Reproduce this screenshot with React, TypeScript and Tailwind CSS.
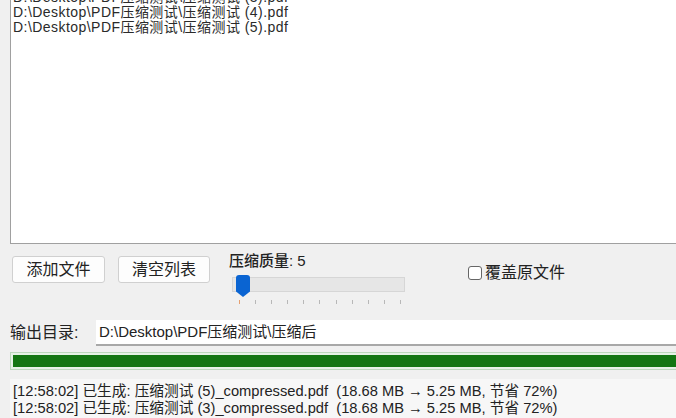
import React from "react";

const files = [
  "D:\\Desktop\\PDF压缩测试\\压缩测试 (3).pdf",
  "D:\\Desktop\\PDF压缩测试\\压缩测试 (4).pdf",
  "D:\\Desktop\\PDF压缩测试\\压缩测试 (5).pdf",
];

const logs = [
  "[12:58:02] 已生成: 压缩测试 (5)_compressed.pdf  (18.68 MB → 5.25 MB, 节省 72%)",
  "[12:58:02] 已生成: 压缩测试 (3)_compressed.pdf  (18.68 MB → 5.25 MB, 节省 72%)",
];

const font = { fontFamily: '"Liberation Sans", "Noto Sans CJK SC", sans-serif' };

export default function App() {
  return (
    <div
      className="w-[676px] h-[418px] overflow-hidden bg-[#f0f0f0] text-[#1a1a1a] flex flex-col"
      style={font}
    >
      {/* file list */}
      <div className="ml-[10px] mr-[-20px] h-[244px] mt-0 bg-white border-l border-b border-[#a0a0a0] overflow-hidden">
        <div className="mt-[-10px] pl-[2px] text-[14px] tracking-[0.45px] leading-[15px] text-[#2a2a2a]">
          {files.map((f) => (
            <div key={f} className="whitespace-pre">{f}</div>
          ))}
        </div>
      </div>

      {/* controls */}
      <div className="flex items-start mt-[12px] h-[58px]">
        <button className="ml-[12px] w-[93px] h-[27px] bg-[#fdfdfd] border border-[#d0d0d0] rounded-[3px] text-[16px] leading-none text-[#222]">
          添加文件
        </button>
        <button className="ml-[13px] w-[92px] h-[27px] bg-[#fdfdfd] border border-[#d0d0d0] rounded-[3px] text-[16px] leading-none text-[#222]">
          清空列表
        </button>
        <div className="ml-[19px] flex flex-col">
          <div className="text-[15px] leading-[16px] mt-[-3px] font-medium text-[#222]">压缩质量: 5</div>
          <div className="relative mt-[8px] ml-[3px] w-[173px] h-[15px] bg-[#e6e6e6] border border-[#d6d6d6]">
            <div className="absolute left-[3px] top-[-3px] w-[14px] h-[22px] bg-[#0a64d2] rounded-t-[3px] [clip-path:polygon(0_0,100%_0,100%_75%,50%_100%,0_75%)]" />
          </div>
          <div className="flex justify-between ml-[10px] w-[162px] mt-[8px]">
            {Array.from({ length: 11 }).map((_, i) => (
              <div key={i} className={`w-px h-[4px] ${i === 0 ? "bg-[#e6a070]" : "bg-[#b8b8b8]"}`} />
            ))}
          </div>
        </div>
        <label className="ml-[63px] mt-[5px] flex items-center text-[16px] text-[#222]">
          <span className="w-[14px] h-[14px] border border-[#666] rounded-[3px] bg-white mr-[3px]" />
          覆盖原文件
        </label>
      </div>

      {/* output dir */}
      <div className="flex items-center mt-[6px] h-[26px]">
        <span className="ml-[10px] w-[86px] text-[16px] text-[#222]">输出目录:</span>
        <div className="flex-1 mr-[-10px] h-[26px] bg-white border-b-2 border-[#a8a8a8] flex items-center pl-[3px] text-[15px] text-[#222]">
          D:\Desktop\PDF压缩测试\压缩后
        </div>
      </div>

      {/* progress */}
      <div className="ml-[10px] mr-[-10px] mt-[6px] h-[18px] bg-[#e6f2e6] border border-[#bcd8bc] p-[2px]">
        <div className="h-full w-full bg-[#137612]" />
      </div>

      {/* log */}
      <div className="ml-[10px] mt-[9px] flex-1 bg-[#f7f7f7] pl-[3px] pt-[4px] text-[14.7px] leading-[17px] text-[#222]">
        {logs.map((l, i) => (
          <div key={i} className="whitespace-pre">{l}</div>
        ))}
      </div>
    </div>
  );
}
